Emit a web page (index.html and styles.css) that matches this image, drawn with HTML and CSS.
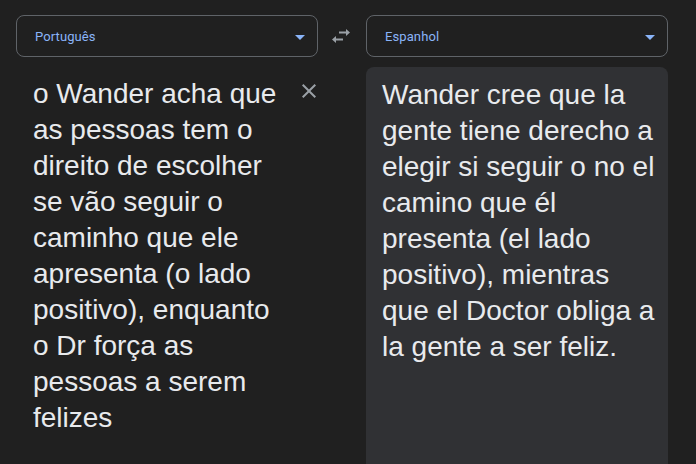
FILE: index.html
```html
<!DOCTYPE html>
<html lang="pt">
<head>
<meta charset="utf-8">
<title>Tradutor</title>
<link rel="stylesheet" href="styles.css">
</head>
<body>
<div class="app">
  <div class="select">
    <span class="select-label">Português</span>
    <span class="caret"></span>
  </div>
  <div class="swap">
    <svg width="20" height="14" viewBox="0 0 20 14" aria-hidden="true">
      <path fill="#9aa0a6" d="M19 3.5L15 0v2.5H8v2h7V7zM1 10.5L5 7v2.5h7v2H5V14z"/>
    </svg>
  </div>
  <div class="select">
    <span class="select-label">Espanhol</span>
    <span class="caret"></span>
  </div>

  <div class="source">
    <div class="source-text">o Wander acha que as pessoas tem o direito de escolher se vão seguir o caminho que ele apresenta (o lado positivo), enquanto o Dr força as pessoas a serem felizes</div>
    <div class="clear">
      <svg width="24" height="24" viewBox="0 0 24 24" aria-hidden="true">
        <path fill="#9aa0a6" d="M19 6.41L17.59 5 12 10.59 6.41 5 5 6.41 10.59 12 5 17.59 6.41 19 12 13.41 17.59 19 19 17.59 13.41 12z"/>
      </svg>
    </div>
  </div>
  <div></div>
  <div class="target">
    <div class="target-text">Wander cree que la gente tiene derecho a elegir si seguir o no el camino que él presenta (el lado positivo), mientras que el Doctor obliga a la gente a ser feliz.</div>
  </div>
</div>
</body>
</html>
```

FILE: styles.css
```css
html, body {
  margin: 0;
  padding: 0;
  background: #202020;
  overflow: hidden;
  height: 464px;
}

.app {
  display: grid;
  grid-template-columns: 302px 48px 302px;
  grid-template-rows: 42px auto;
  row-gap: 10px;
  padding: 15px 0 0 16px;
  font-family: "Liberation Sans", Arial, sans-serif;
  color: #e8eaed;
}

.select {
  box-sizing: border-box;
  border: 1px solid #5f6368;
  border-radius: 8px;
  display: flex;
  align-items: center;
  padding: 0 12px 0 18px;
}

.select-label {
  flex: 1;
  font-family: Roboto, "Liberation Sans", sans-serif;
  font-size: 13px;
  color: #8ab4f8;
  letter-spacing: 0.1px;
}

.caret {
  width: 0;
  height: 0;
  border-left: 5px solid transparent;
  border-right: 5px solid transparent;
  border-top: 5px solid #8ab4f8;
  margin-top: 2px;
}

.swap {
  display: flex;
  align-items: center;
  justify-content: center;
  padding-right: 2px;
}

.source {
  display: flex;
  align-items: flex-start;
  padding: 9px 0 0 17px;
}

.source-text {
  width: 250px;
  flex: none;
  font-size: 28px;
  line-height: 36px;
}

.clear {
  margin-left: 14px;
  margin-top: 3px;
  width: 24px;
  height: 24px;
}

.target {
  background: #303134;
  border-radius: 8px 8px 0 0;
  padding: 10px 8px 10px 16px;
  min-height: 420px;
}

.target-text {
  font-size: 28px;
  line-height: 36px;
}
```
